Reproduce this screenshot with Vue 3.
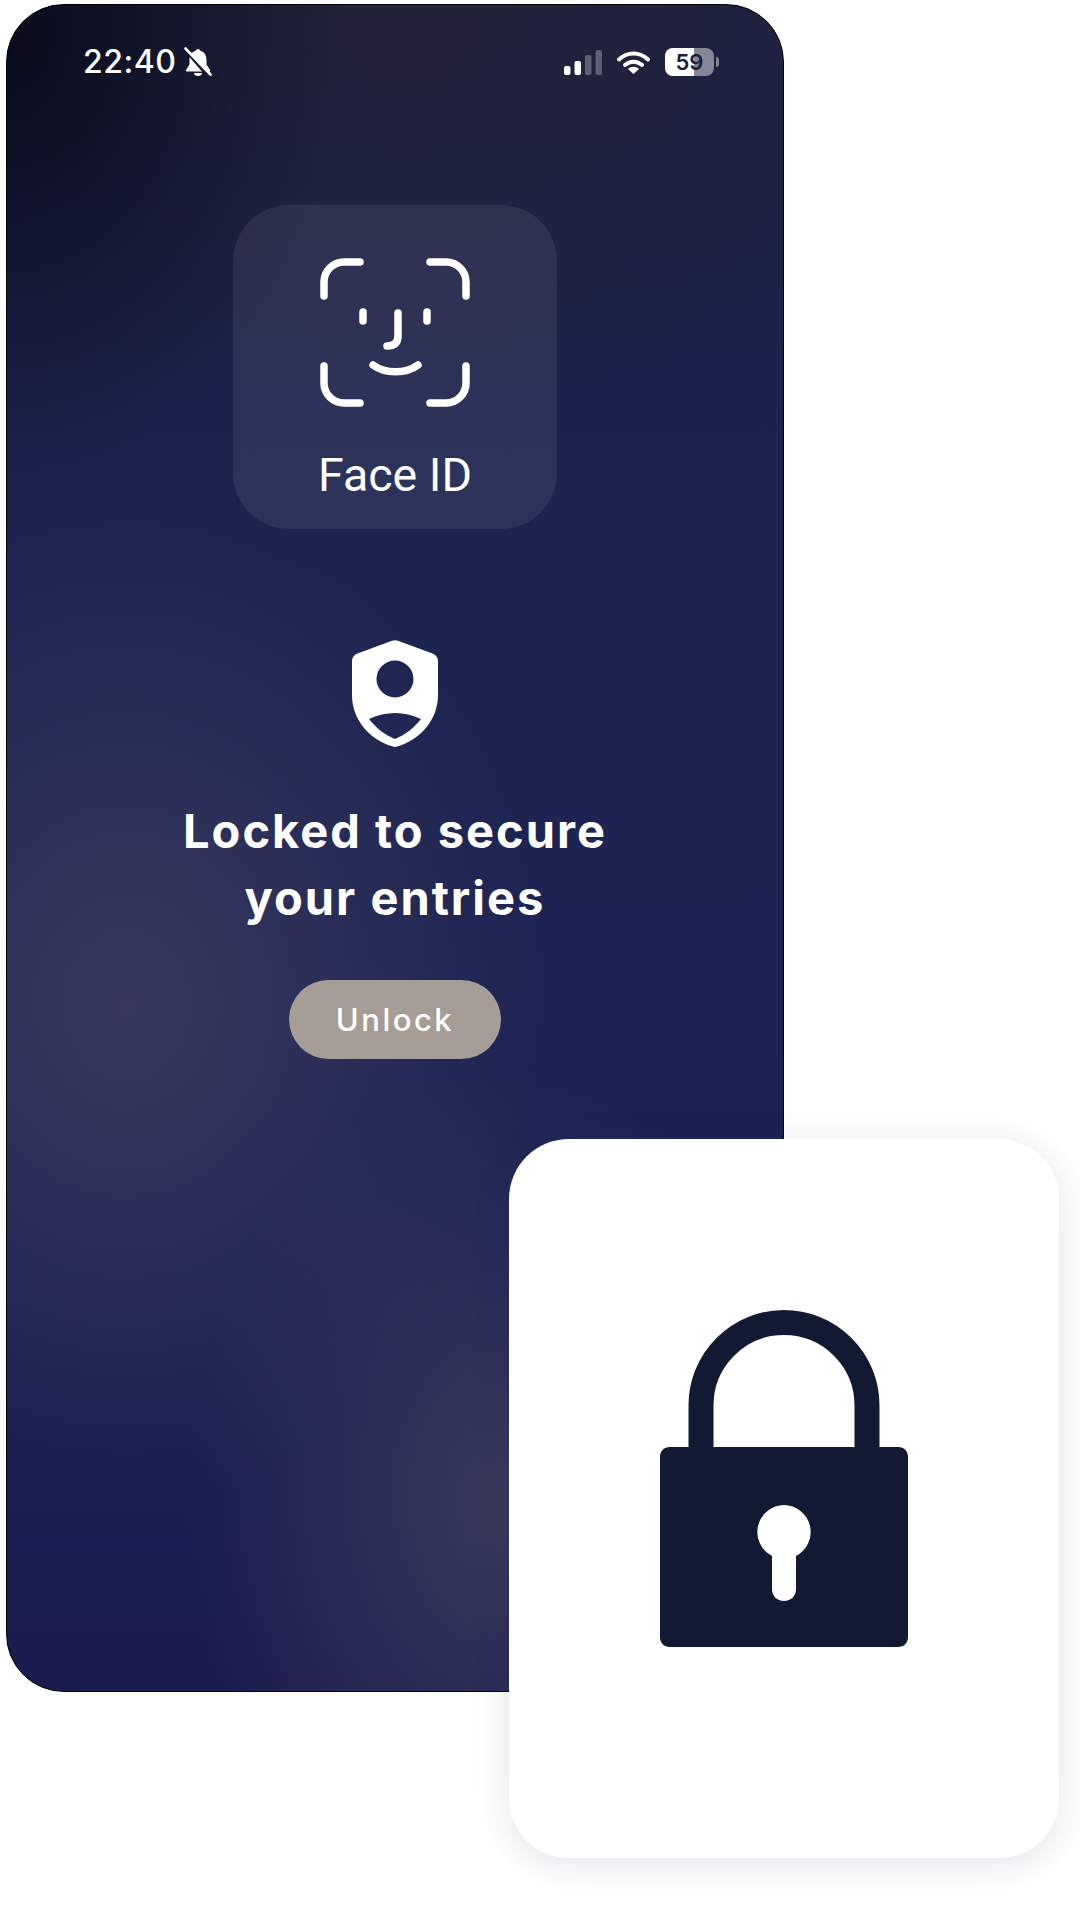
<script setup>
</script>

<template>
  <div class="page">
    <div class="phone">
      <div class="status">
        <div class="status-left">
          <span class="time">22:40</span>
          <svg class="bell" viewBox="0 0 28 30" width="28" height="30">
            <path d="M14 2c1.200 0 2 .7 2.200 1.800C20.500 5 22.500 8.500 22.500 13v4.500l3.500 5.500c.5 1 0 1.500-1 1.500H3c-1 0-1.500-.5-1-1.500l3.500-5.500V13c0-4.500 2-8 6.300-9.200C12 2.700 12.800 2 14 2z" fill="#fff"/>
            <path d="M10 26h8c0 1.800-1.800 3-4 3s-4-1.200-4-3z" fill="#fff"/>
            <path d="M3 5 23 28" stroke="#171a30" stroke-width="3"/>
            <path d="M1.500 1.500 26.500 27.500" stroke="#fff" stroke-width="2.600" stroke-linecap="round"/>
          </svg>
        </div>
        <div class="status-right">
          <svg class="signal" viewBox="0 0 38 25" width="38" height="25">
            <rect x="0" y="16" width="6.500" height="9" rx="2" fill="#fff"/>
            <rect x="10.500" y="11" width="6.500" height="14" rx="2" fill="#fff"/>
            <rect x="21" y="5" width="6.500" height="20" rx="2" fill="#fff" opacity=".28"/>
            <rect x="31.500" y="0" width="6.500" height="25" rx="2" fill="#fff" opacity=".28"/>
          </svg>
          <svg class="wifi" viewBox="0 0 33 23" width="33" height="23">
            <path d="M2 8.500C10.500 .5 22.500 .5 31 8.500" fill="none" stroke="#fff" stroke-width="4" stroke-linecap="round"/>
            <path d="M8 14C13 9.500 20 9.500 25 14" fill="none" stroke="#fff" stroke-width="4" stroke-linecap="round"/>
            <path d="M11 18C14 15 19 15 22 18L16.500 23z" fill="#fff"/>
          </svg>
          <div class="battery">
            <div class="battery-body"><span class="battery-fill"></span><span class="battery-text">59</span></div>
            <span class="battery-nub"></span>
          </div>
        </div>
      </div>

      <div class="faceid">
        <svg class="face" viewBox="0 0 150 150" width="150" height="150">
          <g fill="none" stroke="#fff" stroke-width="7.500" stroke-linecap="round">
            <path d="M4 38V24A20 20 0 0 1 24 4H40"/>
            <path d="M110 4H126A20 20 0 0 1 146 24V38"/>
            <path d="M4 108V125A20 20 0 0 0 24 145H40"/>
            <path d="M110 145H126A20 20 0 0 0 146 125V108"/>
            <path d="M43 54V63"/>
            <path d="M107 54V63"/>
            <path d="M78 55V78C78 85 74 88 67 88"/>
            <path d="M53 107C65 116 86 116 98 107"/>
          </g>
        </svg>
        <span class="faceid-label">Face ID</span>
      </div>

      <svg class="shield" viewBox="0 0 86 107" width="86" height="107">
        <path fill-rule="evenodd" fill="#fff" d="M40 .8C42 0 44 0 46 .8L80.500 13.500C84 14.800 86 17.500 86 21V55C86 80 68 100 45 106.600C43.700 107 42.300 107 41 106.600C18 100 0 80 0 55V21C0 17.500 2 14.800 5.500 13.500ZM43 20.500A18.500 18.500 0 1 0 43 57.500 18.500 18.500 0 1 0 43 20.500ZM17 79C24 88 33 95 43 99C53 95 62 88 69 79C53 71 33 71 17 79Z"/>
      </svg>

      <h1 class="title">Locked to secure<br>your entries</h1>
      <button class="unlock">Unlock</button>
    </div>

    <div class="card">
      <svg class="lock" viewBox="0 0 248 338" width="248" height="338">
        <path d="M41 150V95.500A83 83 0 0 1 207 95.500V150" fill="none" stroke="#121932" stroke-width="25"/>
        <path fill="#121932" fill-rule="evenodd" d="M10 137H238C244 137 248 141 248 147V327C248 333 244 337 238 337H10C4 337 0 333 0 327V147C0 141 4 137 10 137ZM124 195A27 27 0 0 0 112 246V279C112 286 117 291 124 291S136 286 136 279V246A27 27 0 0 0 124 195Z"/>
      </svg>
    </div>
  </div>
</template>

<style>
html, body { margin: 0; padding: 0; background: #fff; }
</style>

<style scoped>
.page {
  position: relative;
  width: 1080px;
  height: 1920px;
  background: #fff;
  overflow: hidden;
  padding: 4px 0 0 6px;
  box-sizing: border-box;
}
.phone {
  width: 778px;
  height: 1688px;
  box-sizing: border-box;
  border: 1px solid #000;
  border-radius: 58px;
  display: flex;
  flex-direction: column;
  align-items: center;
  background:
    radial-gradient(ellipse 420px 500px at 120px 1000px, rgba(58,58,94,.92), rgba(58,58,94,0) 100%),
    radial-gradient(ellipse 320px 440px at 500px 1500px, rgba(62,62,94,.85), rgba(62,62,94,0) 100%),
    radial-gradient(ellipse 340px 440px at 0px 30px, rgba(8,10,26,.95), rgba(8,10,26,0) 100%),
    radial-gradient(ellipse 600px 360px at 400px 30px, rgba(36,36,52,.7), rgba(36,36,52,0) 100%),
    linear-gradient(180deg, #1c2044 0%, #1c2450 35%, #1c2454 60%, #1b2052 80%, #1a1c50 100%);
}
.status {
  align-self: stretch;
  display: flex;
  justify-content: space-between;
  align-items: center;
  height: 28px;
  margin-top: 43px;
  padding: 0 64px 0 76px;
}
.status-left, .status-right { display: flex; align-items: center; }
.time {
  font-family: Inter, sans-serif;
  font-size: 32px;
  font-weight: 500;
  letter-spacing: .5px;
  color: #fff;
  line-height: 28px;
}
.bell { margin-left: 8px; }
.signal { margin-right: 15px; }
.wifi { margin-right: 15px; }
.battery { display: flex; align-items: center; }
.battery-body {
  position: relative;
  width: 49px;
  height: 28px;
  border-radius: 8px;
  background: rgba(255,255,255,.45);
  overflow: hidden;
  display: flex;
  align-items: center;
  justify-content: center;
}
.battery-fill {
  position: absolute;
  left: 0;
  top: 0;
  bottom: 0;
  width: 29px;
  background: #fff;
}
.battery-text {
  position: relative;
  font-family: Inter, sans-serif;
  font-size: 22px;
  font-weight: 600;
  color: #1b2038;
}
.battery-nub {
  width: 3px;
  height: 10px;
  margin-left: 2px;
  background: rgba(255,255,255,.45);
  border-radius: 0 3px 3px 0;
}
.faceid {
  width: 324px;
  height: 324px;
  margin-top: 129px;
  border-radius: 56px;
  background: rgba(255,255,255,.075);
  display: flex;
  flex-direction: column;
  align-items: center;
  padding-top: 53px;
  box-sizing: border-box;
}
.face { display: block; }
.faceid-label {
  margin-top: 41px;
  font-family: Roboto, sans-serif;
  font-size: 46.500px;
  line-height: 52px;
  color: #fff;
}
.shield { margin-top: 111px; display: block; }
.title {
  margin: 50px 0 0;
  font-family: Inter, sans-serif;
  font-size: 47px;
  font-weight: 700;
  line-height: 67px;
  letter-spacing: 2px;
  color: #fff;
  text-align: center;
}
.unlock {
  margin-top: 49px;
  width: 212px;
  height: 79px;
  border: 0;
  border-radius: 40px;
  background: #a69d96;
  color: #fff;
  font-family: Inter, sans-serif;
  font-size: 31px;
  font-weight: 500;
  letter-spacing: 2.500px;
  padding: 0;
}
.card {
  position: absolute;
  left: 509px;
  top: 1139px;
  width: 550px;
  height: 719px;
  border-radius: 60px;
  background: #fff;
  box-shadow: 0 6px 36px rgba(40,50,80,.13);
}
.lock {
  position: absolute;
  left: 151px;
  top: 171px;
}
</style>
